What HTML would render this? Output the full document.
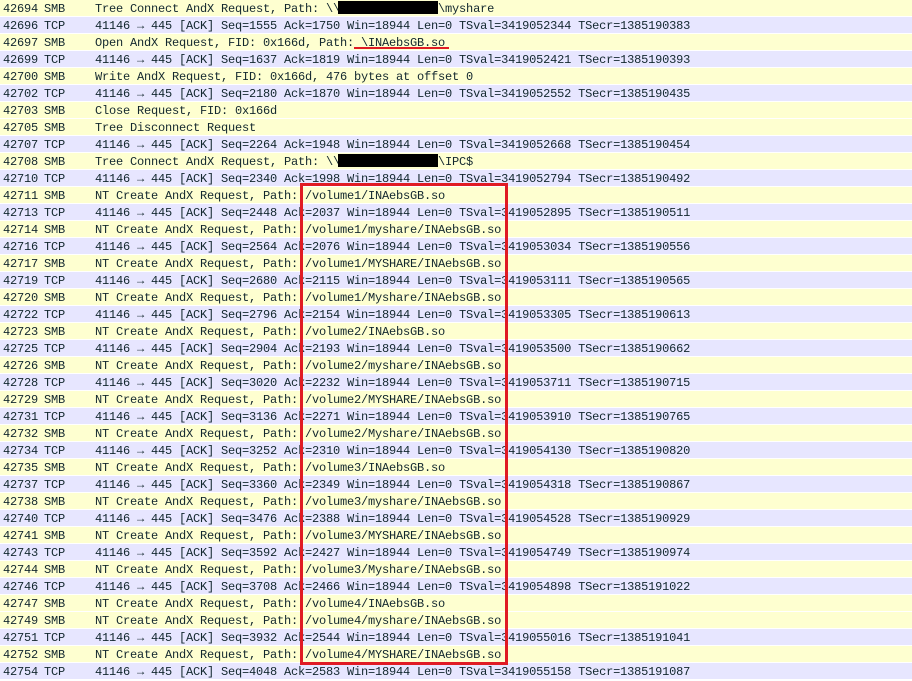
<!DOCTYPE html>
<html><head><meta charset="utf-8"><style>
body{margin:0;width:912px;height:675px;overflow:hidden;background:#fff;font-family:"Liberation Mono",monospace;font-size:12px;letter-spacing:-0.2px;color:#12272e}
.r{position:absolute;left:0;width:912px;height:16px;border-bottom:1px solid #fff;line-height:18px;white-space:pre}
.s{background:#feffd0}.t{background:#e7e6ff}
.n{position:absolute;left:3px}.p{position:absolute;left:44px}.i{position:absolute;left:95px}
.blk{position:absolute;background:#000;height:13px;width:100px;left:338px}
</style></head><body>
<div class="r s" style="top:0"><span class="n">42694</span><span class="p">SMB</span><span class="i">Tree Connect AndX Request, Path: \\              \myshare</span></div>
<div class="blk" style="top:1px"></div>
<div class="r t" style="top:17px"><span class="n">42696</span><span class="p">TCP</span><span class="i">41146 → 445 [ACK] Seq=1555 Ack=1750 Win=18944 Len=0 TSval=3419052344 TSecr=1385190383</span></div>
<div class="r s" style="top:34px"><span class="n">42697</span><span class="p">SMB</span><span class="i">Open AndX Request, FID: 0x166d, Path: \INAebsGB.so</span></div>
<div style="position:absolute;left:354px;top:47px;width:95px;height:2px;background:#e01b24"></div>
<div class="r t" style="top:51px"><span class="n">42699</span><span class="p">TCP</span><span class="i">41146 → 445 [ACK] Seq=1637 Ack=1819 Win=18944 Len=0 TSval=3419052421 TSecr=1385190393</span></div>
<div class="r s" style="top:68px"><span class="n">42700</span><span class="p">SMB</span><span class="i">Write AndX Request, FID: 0x166d, 476 bytes at offset 0</span></div>
<div class="r t" style="top:85px"><span class="n">42702</span><span class="p">TCP</span><span class="i">41146 → 445 [ACK] Seq=2180 Ack=1870 Win=18944 Len=0 TSval=3419052552 TSecr=1385190435</span></div>
<div class="r s" style="top:102px"><span class="n">42703</span><span class="p">SMB</span><span class="i">Close Request, FID: 0x166d</span></div>
<div class="r s" style="top:119px"><span class="n">42705</span><span class="p">SMB</span><span class="i">Tree Disconnect Request</span></div>
<div class="r t" style="top:136px"><span class="n">42707</span><span class="p">TCP</span><span class="i">41146 → 445 [ACK] Seq=2264 Ack=1948 Win=18944 Len=0 TSval=3419052668 TSecr=1385190454</span></div>
<div class="r s" style="top:153px"><span class="n">42708</span><span class="p">SMB</span><span class="i">Tree Connect AndX Request, Path: \\              \IPC$</span></div>
<div class="blk" style="top:154px"></div>
<div class="r t" style="top:170px"><span class="n">42710</span><span class="p">TCP</span><span class="i">41146 → 445 [ACK] Seq=2340 Ack=1998 Win=18944 Len=0 TSval=3419052794 TSecr=1385190492</span></div>
<div class="r s" style="top:187px"><span class="n">42711</span><span class="p">SMB</span><span class="i">NT Create AndX Request, Path: /volume1/INAebsGB.so</span></div>
<div class="r t" style="top:204px"><span class="n">42713</span><span class="p">TCP</span><span class="i">41146 → 445 [ACK] Seq=2448 Ack=2037 Win=18944 Len=0 TSval=3419052895 TSecr=1385190511</span></div>
<div class="r s" style="top:221px"><span class="n">42714</span><span class="p">SMB</span><span class="i">NT Create AndX Request, Path: /volume1/myshare/INAebsGB.so</span></div>
<div class="r t" style="top:238px"><span class="n">42716</span><span class="p">TCP</span><span class="i">41146 → 445 [ACK] Seq=2564 Ack=2076 Win=18944 Len=0 TSval=3419053034 TSecr=1385190556</span></div>
<div class="r s" style="top:255px"><span class="n">42717</span><span class="p">SMB</span><span class="i">NT Create AndX Request, Path: /volume1/MYSHARE/INAebsGB.so</span></div>
<div class="r t" style="top:272px"><span class="n">42719</span><span class="p">TCP</span><span class="i">41146 → 445 [ACK] Seq=2680 Ack=2115 Win=18944 Len=0 TSval=3419053111 TSecr=1385190565</span></div>
<div class="r s" style="top:289px"><span class="n">42720</span><span class="p">SMB</span><span class="i">NT Create AndX Request, Path: /volume1/Myshare/INAebsGB.so</span></div>
<div class="r t" style="top:306px"><span class="n">42722</span><span class="p">TCP</span><span class="i">41146 → 445 [ACK] Seq=2796 Ack=2154 Win=18944 Len=0 TSval=3419053305 TSecr=1385190613</span></div>
<div class="r s" style="top:323px"><span class="n">42723</span><span class="p">SMB</span><span class="i">NT Create AndX Request, Path: /volume2/INAebsGB.so</span></div>
<div class="r t" style="top:340px"><span class="n">42725</span><span class="p">TCP</span><span class="i">41146 → 445 [ACK] Seq=2904 Ack=2193 Win=18944 Len=0 TSval=3419053500 TSecr=1385190662</span></div>
<div class="r s" style="top:357px"><span class="n">42726</span><span class="p">SMB</span><span class="i">NT Create AndX Request, Path: /volume2/myshare/INAebsGB.so</span></div>
<div class="r t" style="top:374px"><span class="n">42728</span><span class="p">TCP</span><span class="i">41146 → 445 [ACK] Seq=3020 Ack=2232 Win=18944 Len=0 TSval=3419053711 TSecr=1385190715</span></div>
<div class="r s" style="top:391px"><span class="n">42729</span><span class="p">SMB</span><span class="i">NT Create AndX Request, Path: /volume2/MYSHARE/INAebsGB.so</span></div>
<div class="r t" style="top:408px"><span class="n">42731</span><span class="p">TCP</span><span class="i">41146 → 445 [ACK] Seq=3136 Ack=2271 Win=18944 Len=0 TSval=3419053910 TSecr=1385190765</span></div>
<div class="r s" style="top:425px"><span class="n">42732</span><span class="p">SMB</span><span class="i">NT Create AndX Request, Path: /volume2/Myshare/INAebsGB.so</span></div>
<div class="r t" style="top:442px"><span class="n">42734</span><span class="p">TCP</span><span class="i">41146 → 445 [ACK] Seq=3252 Ack=2310 Win=18944 Len=0 TSval=3419054130 TSecr=1385190820</span></div>
<div class="r s" style="top:459px"><span class="n">42735</span><span class="p">SMB</span><span class="i">NT Create AndX Request, Path: /volume3/INAebsGB.so</span></div>
<div class="r t" style="top:476px"><span class="n">42737</span><span class="p">TCP</span><span class="i">41146 → 445 [ACK] Seq=3360 Ack=2349 Win=18944 Len=0 TSval=3419054318 TSecr=1385190867</span></div>
<div class="r s" style="top:493px"><span class="n">42738</span><span class="p">SMB</span><span class="i">NT Create AndX Request, Path: /volume3/myshare/INAebsGB.so</span></div>
<div class="r t" style="top:510px"><span class="n">42740</span><span class="p">TCP</span><span class="i">41146 → 445 [ACK] Seq=3476 Ack=2388 Win=18944 Len=0 TSval=3419054528 TSecr=1385190929</span></div>
<div class="r s" style="top:527px"><span class="n">42741</span><span class="p">SMB</span><span class="i">NT Create AndX Request, Path: /volume3/MYSHARE/INAebsGB.so</span></div>
<div class="r t" style="top:544px"><span class="n">42743</span><span class="p">TCP</span><span class="i">41146 → 445 [ACK] Seq=3592 Ack=2427 Win=18944 Len=0 TSval=3419054749 TSecr=1385190974</span></div>
<div class="r s" style="top:561px"><span class="n">42744</span><span class="p">SMB</span><span class="i">NT Create AndX Request, Path: /volume3/Myshare/INAebsGB.so</span></div>
<div class="r t" style="top:578px"><span class="n">42746</span><span class="p">TCP</span><span class="i">41146 → 445 [ACK] Seq=3708 Ack=2466 Win=18944 Len=0 TSval=3419054898 TSecr=1385191022</span></div>
<div class="r s" style="top:595px"><span class="n">42747</span><span class="p">SMB</span><span class="i">NT Create AndX Request, Path: /volume4/INAebsGB.so</span></div>
<div class="r s" style="top:612px"><span class="n">42749</span><span class="p">SMB</span><span class="i">NT Create AndX Request, Path: /volume4/myshare/INAebsGB.so</span></div>
<div class="r t" style="top:629px"><span class="n">42751</span><span class="p">TCP</span><span class="i">41146 → 445 [ACK] Seq=3932 Ack=2544 Win=18944 Len=0 TSval=3419055016 TSecr=1385191041</span></div>
<div class="r s" style="top:646px"><span class="n">42752</span><span class="p">SMB</span><span class="i">NT Create AndX Request, Path: /volume4/MYSHARE/INAebsGB.so</span></div>
<div class="r t" style="top:663px"><span class="n">42754</span><span class="p">TCP</span><span class="i">41146 → 445 [ACK] Seq=4048 Ack=2583 Win=18944 Len=0 TSval=3419055158 TSecr=1385191087</span></div>
<div style="position:absolute;left:300px;top:183px;width:202px;height:476px;border:3px solid #e01b24"></div>
</body></html>
